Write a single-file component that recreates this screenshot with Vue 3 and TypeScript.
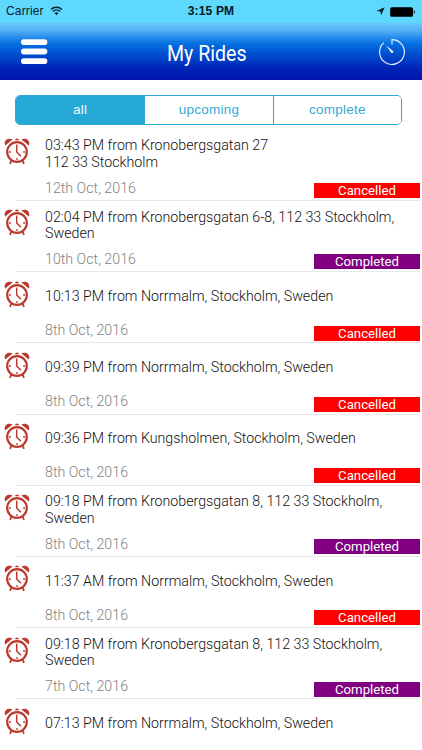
<script setup lang="ts">
import { ref } from 'vue'

type Status = 'Cancelled' | 'Completed'

interface Ride {
  lines: string[]
  date?: string
  status?: Status
}

const tabs = ['all', 'upcoming', 'complete']
const activeTab = ref('all')

const rides: Ride[] = [
  { lines: ['03:43 PM from Kronobergsgatan 27', '112 33 Stockholm'], date: '12th Oct, 2016', status: 'Cancelled' },
  { lines: ['02:04 PM from Kronobergsgatan 6-8, 112 33 Stockholm,', 'Sweden'], date: '10th Oct, 2016', status: 'Completed' },
  { lines: ['10:13 PM from Norrmalm, Stockholm, Sweden'], date: '8th Oct, 2016', status: 'Cancelled' },
  { lines: ['09:39 PM from Norrmalm, Stockholm, Sweden'], date: '8th Oct, 2016', status: 'Cancelled' },
  { lines: ['09:36 PM from Kungsholmen, Stockholm, Sweden'], date: '8th Oct, 2016', status: 'Cancelled' },
  { lines: ['09:18 PM from Kronobergsgatan 8, 112 33 Stockholm,', 'Sweden'], date: '8th Oct, 2016', status: 'Completed' },
  { lines: ['11:37 AM from Norrmalm, Stockholm, Sweden'], date: '8th Oct, 2016', status: 'Cancelled' },
  { lines: ['09:18 PM from Kronobergsgatan 8, 112 33 Stockholm,', 'Sweden'], date: '7th Oct, 2016', status: 'Completed' },
  { lines: ['07:13 PM from Norrmalm, Stockholm, Sweden'] },
]
</script>

<template>
  <div class="screen">
    <header class="header">
      <div class="status-bar">
        <div class="carrier">
          <span>Carrier</span>
          <svg class="wifi" width="13" height="10" viewBox="0 0 13 10" fill="none" stroke="#06212b">
            <path d="M1 3.5a8 8 0 0 1 11 0M2.9 5.5a5.2 5.2 0 0 1 7.2 0" stroke-width="1.4" />
            <path d="M4.5 7.1a3 3 0 0 1 4 0L6.5 9.2z" fill="#06212b" stroke="none" />
          </svg>
        </div>
        <strong class="clock">3:15 PM</strong>
        <div class="indicators">
          <svg width="9" height="9" viewBox="0 0 9 9"><path d="M8.7.3 5 8.6 4.5 4.5.4 4z" fill="#041b25" /></svg>
          <svg width="26" height="10" viewBox="0 0 26 10" fill="#000">
            <rect x="0.2" y="0.2" width="22.8" height="9.6" rx="1.6" />
            <path d="M23.8 3.3c1.5.4 1.5 3 0 3.4z" />
          </svg>
        </div>
      </div>
      <div class="nav">
        <button class="icon-button" aria-label="Menu">
          <svg width="26" height="26" viewBox="0 0 26 26" fill="#fff">
            <rect y="0.3" width="26.3" height="5.8" rx="2.8" />
            <rect y="9.6" width="26.3" height="5.8" rx="2.8" />
            <rect y="19.2" width="26.3" height="5.8" rx="2.8" />
          </svg>
        </button>
        <h1 class="title">My Rides</h1>
        <button class="icon-button" aria-label="Timer">
          <svg width="28" height="28" viewBox="0 0 28 28" fill="none" stroke="#e6f0ff" stroke-width="1.1">
            <path d="M14 6.5V1.6A12.4 12.4 0 1 1 5.9 4.6" />
            <path d="M8.1 7.6 15.2 13.2a1.3 1.3 0 0 1-1.7 1.7z" fill="#fff" stroke="none" />
          </svg>
        </button>
      </div>
    </header>

    <div class="tabs">
      <button
        v-for="tab in tabs"
        :key="tab"
        class="tab"
        :class="{ active: tab === activeTab }"
        @click="activeTab = tab"
      >{{ tab }}</button>
    </div>

    <ul class="rides">
      <li v-for="(ride, i) in rides" :key="i" class="ride">
        <svg class="alarm" width="26" height="27" viewBox="0 0 26 27" fill="none" stroke="#bb3a2d">
          <path d="M1.2 7.4C-.8 3.4 3.2-.8 8.6 1.4zM24.8 7.4C26.800 3.400 22.800-.8 17.400 1.400z" fill="#bb3a2d" stroke="none" />
          <path d="M11.2 1.300q1.800-1.400 3.600 0v1h-3.600z" fill="#bb3a2d" stroke="none" />
          <circle cx="13" cy="14" r="9.800" stroke-width="2.200" />
          <path d="M7.400 22.500 6 25.800M18.600 22.500l1.400 3.300" stroke-width="1.800" />
          <path d="M12.700 6.500v7.500l4.200 4.200" stroke-width="1.500" />
          <path d="M5 14h1.900M19.100 14h1.900M13 20v2" stroke-width="1.300" />
        </svg>
        <div class="details">
          <div class="address">
            <span v-for="line in ride.lines" :key="line" class="line">{{ line }}</span>
          </div>
          <div v-if="ride.status" class="meta">
            <time class="date">{{ ride.date }}</time>
            <span class="badge" :class="ride.status.toLowerCase()">{{ ride.status }}</span>
          </div>
        </div>
      </li>
    </ul>
  </div>
</template>

<style>
body {
  margin: 0;
  background: #fff;
  overflow: hidden;
}
</style>

<style scoped>
.screen {
  width: 422px;
  height: 750px;
  overflow: hidden;
  background: #fff;
  font-family: Roboto, sans-serif;
}

.header {
  height: 80px;
  background: linear-gradient(#5fd8fe 0, #5fd8fe 22.5px, #6bc5fd 23px, #55b3f8 30px, #2b8eed 37px, #056fe0 44px, #0058d4 51px, #003dc6 60px, #0020b4 70px, #0015aa 80px);
}

.status-bar {
  display: grid;
  grid-template-columns: 1fr auto 1fr;
  align-items: center;
  height: 23px;
  padding: 0 6px;
  font: 12px/23px "Liberation Sans", sans-serif;
  color: #06212b;
}

.carrier {
  display: flex;
  align-items: center;
  gap: 6px;
  letter-spacing: 0.15px;
}

.wifi {
  margin-top: -2px;
}

.clock {
  letter-spacing: 0.15px;
  color: #031820;
}

.indicators {
  display: flex;
  align-items: center;
  justify-content: flex-end;
  gap: 5px;
}

.nav {
  display: grid;
  grid-template-columns: 1fr auto 1fr;
  align-items: center;
  height: 57px;
  padding: 0 16px 0 21px;
}

.icon-button {
  display: flex;
  padding: 0;
  border: 0;
  background: none;
}

.icon-button:last-child {
  justify-self: end;
}

.icon-button svg {
  overflow: visible;
}

.title {
  margin: 5px 14px 0 0;
  font-size: 22px;
  font-weight: 400;
  line-height: 28px;
  color: #fff;
  transform: scaleX(0.89);
}

.tabs {
  display: grid;
  grid-template-columns: repeat(3, 1fr);
  box-sizing: border-box;
  height: 30px;
  margin: 15px 20px 0 15px;
  border: 1px solid #35a9d5;
  border-radius: 5px;
  overflow: hidden;
}

.tab {
  padding: 0;
  border: 0;
  background: #fff;
  font: 13.5px/28px "Liberation Sans", sans-serif;
  letter-spacing: 0.25px;
  color: #35a9d5;
}

.tab + .tab {
  border-left: 1px solid #35a9d5;
}

.tab.active {
  background: #25a8d6;
  color: #eefaff;
}

.rides {
  margin: 0;
  padding: 4.9px 0 0;
  list-style: none;
}

.ride {
  display: flex;
  box-sizing: border-box;
  height: 71.2px;
  padding: 8px 2px 0 4px;
  background: linear-gradient(#e8e8ea, #e8e8ea) 16px 100% / 404px 1px no-repeat;
}

.ride:last-child {
  background: none;
}

.alarm {
  flex: none;
  margin-top: 0.4px;
}

.details {
  flex: 1;
  margin-left: 15px;
}

.address {
  display: flex;
  flex-direction: column;
  justify-content: center;
  height: 32px;
}

.line {
  font-size: 14.22px;
  font-weight: 300;
  line-height: 16.5px;
  white-space: nowrap;
  color: #111;
}

.meta {
  display: flex;
  justify-content: space-between;
  align-items: flex-start;
  height: 27px;
}

.date {
  margin-top: 8.8px;
  font-size: 14.22px;
  font-weight: 300;
  line-height: 18px;
  color: #828282;
}

.badge {
  width: 106px;
  height: 15px;
  margin-top: 13.3px;
  font-size: 13.2px;
  font-weight: 400;
  line-height: 15.4px;
  text-align: center;
  color: #fff;
}

.cancelled {
  background: #fe0000;
}

.completed {
  background: #800080;
}
</style>
